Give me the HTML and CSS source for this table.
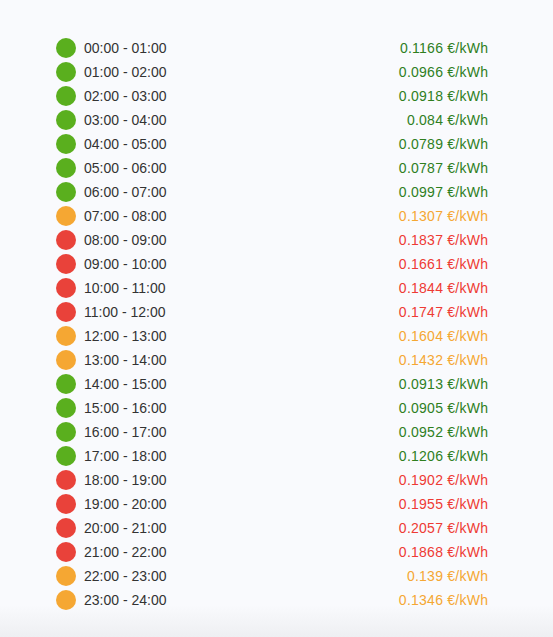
FILE: index.html
```html
<!DOCTYPE html>
<html>
<head>
<meta charset="utf-8">
<link rel="stylesheet" href="styles.css">
</head>
<body>
<div class="page">
  <ul class="list">
    <li class="row green"><span class="dot"></span><span class="time">00:00 - 01:00</span><span class="price">0.1166 €/kWh</span></li>
    <li class="row green"><span class="dot"></span><span class="time">01:00 - 02:00</span><span class="price">0.0966 €/kWh</span></li>
    <li class="row green"><span class="dot"></span><span class="time">02:00 - 03:00</span><span class="price">0.0918 €/kWh</span></li>
    <li class="row green"><span class="dot"></span><span class="time">03:00 - 04:00</span><span class="price">0.084 €/kWh</span></li>
    <li class="row green"><span class="dot"></span><span class="time">04:00 - 05:00</span><span class="price">0.0789 €/kWh</span></li>
    <li class="row green"><span class="dot"></span><span class="time">05:00 - 06:00</span><span class="price">0.0787 €/kWh</span></li>
    <li class="row green"><span class="dot"></span><span class="time">06:00 - 07:00</span><span class="price">0.0997 €/kWh</span></li>
    <li class="row orange"><span class="dot"></span><span class="time">07:00 - 08:00</span><span class="price">0.1307 €/kWh</span></li>
    <li class="row red"><span class="dot"></span><span class="time">08:00 - 09:00</span><span class="price">0.1837 €/kWh</span></li>
    <li class="row red"><span class="dot"></span><span class="time">09:00 - 10:00</span><span class="price">0.1661 €/kWh</span></li>
    <li class="row red"><span class="dot"></span><span class="time">10:00 - 11:00</span><span class="price">0.1844 €/kWh</span></li>
    <li class="row red"><span class="dot"></span><span class="time">11:00 - 12:00</span><span class="price">0.1747 €/kWh</span></li>
    <li class="row orange"><span class="dot"></span><span class="time">12:00 - 13:00</span><span class="price">0.1604 €/kWh</span></li>
    <li class="row orange"><span class="dot"></span><span class="time">13:00 - 14:00</span><span class="price">0.1432 €/kWh</span></li>
    <li class="row green"><span class="dot"></span><span class="time">14:00 - 15:00</span><span class="price">0.0913 €/kWh</span></li>
    <li class="row green"><span class="dot"></span><span class="time">15:00 - 16:00</span><span class="price">0.0905 €/kWh</span></li>
    <li class="row green"><span class="dot"></span><span class="time">16:00 - 17:00</span><span class="price">0.0952 €/kWh</span></li>
    <li class="row green"><span class="dot"></span><span class="time">17:00 - 18:00</span><span class="price">0.1206 €/kWh</span></li>
    <li class="row red"><span class="dot"></span><span class="time">18:00 - 19:00</span><span class="price">0.1902 €/kWh</span></li>
    <li class="row red"><span class="dot"></span><span class="time">19:00 - 20:00</span><span class="price">0.1955 €/kWh</span></li>
    <li class="row red"><span class="dot"></span><span class="time">20:00 - 21:00</span><span class="price">0.2057 €/kWh</span></li>
    <li class="row red"><span class="dot"></span><span class="time">21:00 - 22:00</span><span class="price">0.1868 €/kWh</span></li>
    <li class="row orange"><span class="dot"></span><span class="time">22:00 - 23:00</span><span class="price">0.139 €/kWh</span></li>
    <li class="row orange"><span class="dot"></span><span class="time">23:00 - 24:00</span><span class="price">0.1346 €/kWh</span></li>
  </ul>
</div>
</body>
</html>
```
FILE: styles.css
```css
html, body {
  margin: 0;
  padding: 0;
  height: 100%;
}
body {
  background: linear-gradient(to bottom, #f9fafd 0, #f9fafd 605px, #eeeff2 637px);
  font-family: "Liberation Sans", Arial, sans-serif;
  font-size: 14px;
  color: #333333;
}
.page {
  padding: 36px 65px 0 56px;
}
.list {
  list-style: none;
  margin: 0;
  padding: 0;
}
.row {
  display: flex;
  align-items: center;
  height: 24px;
}
.dot {
  width: 20px;
  height: 20px;
  border-radius: 50%;
  flex: none;
  margin-right: 8px;
}
.time {
  flex: 1;
}
.price {
  letter-spacing: 0.25px;
  margin-right: -0.25px;
}
.green .dot { background: #5aaf1e; }
.orange .dot { background: #f5a733; }
.red .dot { background: #e9423a; }
.green .price { color: #2f7f1e; }
.orange .price { color: #f5a733; }
.red .price { color: #ee3a34; }
```
